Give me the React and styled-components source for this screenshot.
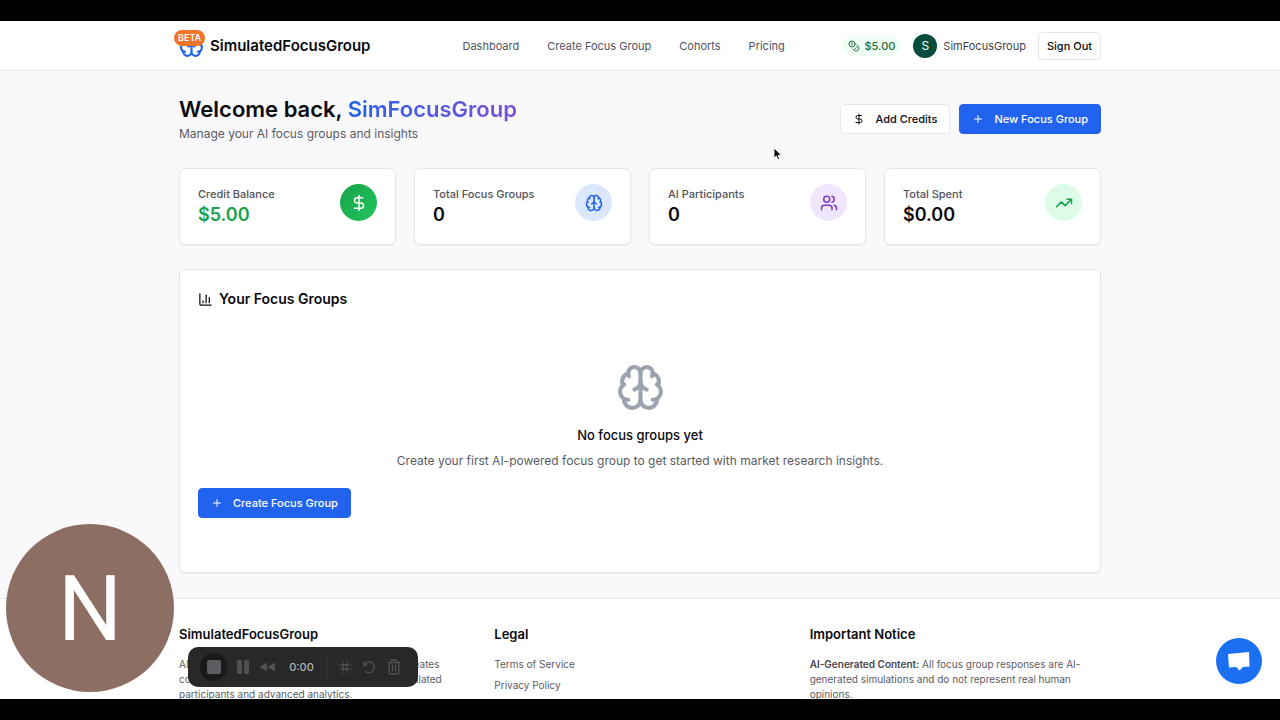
import styled, { createGlobalStyle } from "styled-components";
import { Brain, ChartColumn, Coins, DollarSign, Plus, TrendingUp, Users } from "lucide-react";

const stats = [
    { label: "Credit Balance", value: "$5.00", valueColor: "#16a34a", icon: DollarSign, color: "#ffffff", bg: "linear-gradient(135deg, #16a34a, #22c55e)" },
    { label: "Total Focus Groups", value: "0", icon: Brain, color: "#2563eb", bg: "#dbe7fd" },
    { label: "AI Participants", value: "0", icon: Users, color: "#7e3bc9", bg: "#f0e6fe" },
    { label: "Total Spent", value: "$0.00", icon: TrendingUp, color: "#16a34a", bg: "#dcfce7" },
];

const App = () => {
    return (
        <Frame>
            <GlobalStyle />
            <Screen>
                <Header>
                    <HeaderInner>
                        <Logo href="#">
                            <LogoMark>
                                <Brain size={25} color="#2563eb" />
                                <Beta>BETA</Beta>
                            </LogoMark>
                            SimulatedFocusGroup
                        </Logo>
                        <Nav>
                            <a href="#">Dashboard</a>
                            <a href="#">Create Focus Group</a>
                            <a href="#">Cohorts</a>
                            <a href="#">Pricing</a>
                        </Nav>
                        <Account>
                            <Credits>
                                <Coins size={12} />
                                $5.00
                            </Credits>
                            <User>
                                <UserInitial>S</UserInitial>
                                SimFocusGroup
                            </User>
                            <SignOut>Sign Out</SignOut>
                        </Account>
                    </HeaderInner>
                </Header>

                <Main>
                    <Welcome>
                        <div>
                            <h1>
                                Welcome back, <span>SimFocusGroup</span>
                            </h1>
                            <p>Manage your AI focus groups and insights</p>
                        </div>
                        <Actions>
                            <Button>
                                <DollarSign size={12} />
                                Add Credits
                            </Button>
                            <Button $primary>
                                <Plus size={12} />
                                New Focus Group
                            </Button>
                        </Actions>
                    </Welcome>

                    <Stats>
                        {stats.map(({ label, value, valueColor, icon: Icon, color, bg }) => (
                            <StatCard key={label}>
                                <div>
                                    <StatLabel>{label}</StatLabel>
                                    <StatValue $color={valueColor}>{value}</StatValue>
                                </div>
                                <StatIcon $bg={bg} $color={color}>
                                    <Icon size={18} />
                                </StatIcon>
                            </StatCard>
                        ))}
                    </Stats>

                    <Panel>
                        <PanelTitle>
                            <ChartColumn size={15} />
                            Your Focus Groups
                        </PanelTitle>
                        <Empty>
                            <Brain size={49} color="#9ca3af" />
                            <h3>No focus groups yet</h3>
                            <p>Create your first AI-powered focus group to get started with market research insights.</p>
                        </Empty>
                        <Button $primary>
                            <Plus size={12} />
                            Create Focus Group
                        </Button>
                    </Panel>
                </Main>

                <Footer>
                    <FooterInner>
                        <FooterColumn>
                            <h4>SimulatedFocusGroup</h4>
                            <p>
                                AI-powered focus group research platform that creates
                                <br />
                                comprehensive market research insights with simulated
                                <br />
                                participants and advanced analytics.
                            </p>
                        </FooterColumn>
                        <FooterColumn>
                            <h4>Legal</h4>
                            <FooterLinks>
                                <a href="#">Terms of Service</a>
                                <a href="#">Privacy Policy</a>
                            </FooterLinks>
                        </FooterColumn>
                        <FooterColumn>
                            <h4>Important Notice</h4>
                            <p>
                                <strong>AI-Generated Content:</strong> All focus group responses are AI-generated simulations and do not represent real human opinions.
                            </p>
                        </FooterColumn>
                    </FooterInner>
                </Footer>
            </Screen>

            <CameraBubble>N</CameraBubble>
            <Recorder>
                <StopButton aria-label="Stop">
                    <svg width="14" height="14" viewBox="0 0 14 14" fill="#5c5c61">
                        <rect width="14" height="14" rx="2" />
                    </svg>
                </StopButton>
                <RecorderButton aria-label="Pause">
                    <svg width="12" height="14" viewBox="0 0 12 14" fill="#505054">
                        <rect width="5" height="14" rx="1.5" />
                        <rect x="7" width="5" height="14" rx="1.5" />
                    </svg>
                </RecorderButton>
                <RecorderButton aria-label="Rewind">
                    <svg width="16" height="10" viewBox="0 0 16 10" fill="#505054">
                        <path d="M8 0.5v9L0.5 5zM16 0.5v9L8.5 5z" />
                    </svg>
                </RecorderButton>
                <time>0:00</time>
                <Divider />
                <RecorderButton aria-label="Effects">
                    <svg width="14" height="14" viewBox="0 0 14 14" fill="none" stroke="#505054" strokeWidth="1.4" strokeLinecap="round">
                        <path d="M5 3.5v7M9 3.5v7M3.5 5h7M3.5 9h7" />
                        <path d="M5 1v0M9 1v0M5 13v0M9 13v0M1 5h0M1 9h0M13 5h0M13 9h0" />
                    </svg>
                </RecorderButton>
                <RecorderButton aria-label="Restart">
                    <svg width="14" height="14" viewBox="0 0 14 14" fill="none" stroke="#505054" strokeWidth="1.3" strokeLinecap="round" strokeLinejoin="round">
                        <path d="M1.8 2v3h3M2 5a5.4 5.4 0 1 1 1.6 6.4" />
                    </svg>
                </RecorderButton>
                <RecorderButton aria-label="Delete">
                    <svg width="14" height="16" viewBox="0 0 14 16" fill="none" stroke="#505054" strokeWidth="1.4" strokeLinecap="round" strokeLinejoin="round">
                        <path d="M1 3.5h12M4.5 3.5V1h5v2.5M2.2 3.5v10q0 1.5 1.5 1.5h6.6q1.5 0 1.5-1.5v-10M5.5 6.5v5.5M8.5 6.5v5.5" />
                    </svg>
                </RecorderButton>
            </Recorder>
            <ChatButton aria-label="Open chat">
                <svg width="24" height="22" viewBox="0 0 24 22" fill="#ffffff">
                    <path d="M1 4L22 2L22.5 16.5L16 17L12.5 20.5L9 17L2 17.5z" />
                </svg>
            </ChatButton>
            <Pointer width="10" height="14" viewBox="0 0 10 14">
                <path d="M1 1v10l2.3-2 1.5 3.6 1.8-.8L5.1 8.3H8.5z" fill="#111" stroke="#fff" strokeWidth="0.8" />
            </Pointer>
        </Frame>
    );
};

const GlobalStyle = createGlobalStyle`
    * {
        box-sizing: border-box;
    }
    body {
        margin: 0;
        background: #000;
        font-family: Inter, "Liberation Sans", sans-serif;
        font-size: 12px;
        color: #0a0a0f;
    }
    h1, h2, h3, h4, p {
        margin: 0;
    }
    a {
        color: inherit;
        text-decoration: none;
    }
    button {
        font: inherit;
        cursor: pointer;
    }
    svg {
        flex-shrink: 0;
    }
`;

const Frame = styled.div`
    position: relative;
    height: 100vh;
    padding: 21px 0;
    background: #000;
`;

const Screen = styled.div`
    height: 100%;
    overflow: hidden;
    background: #f9f9fc;
`;

const Container = styled.div`
    max-width: 922px;
    margin: 0 auto;
`;

const Header = styled.header`
    background: #fff;
    border-bottom: 1px solid #e8e8ec;
`;

const HeaderInner = styled(Container)`
    display: flex;
    align-items: center;
    height: 49px;
`;

const Logo = styled.a`
    display: flex;
    align-items: center;
    gap: 6px;
    font-size: 15px;
    font-weight: 600;
`;

const LogoMark = styled.span`
    position: relative;
    display: flex;
`;

const Beta = styled.span`
    position: absolute;
    top: -3px;
    left: -5px;
    padding: 0 4px;
    border-radius: 8px;
    background: #f0742a;
    color: #fff;
    font-size: 9px;
    font-weight: 600;
    line-height: 16px;
`;

const Nav = styled.nav`
    display: flex;
    gap: 28px;
    margin-left: 92px;
    font-size: 11px;
    color: #52525b;
`;

const Account = styled.div`
    display: flex;
    align-items: center;
    gap: 12px;
    margin-left: auto;
    font-size: 11px;
    color: #3f3f46;
`;

const Credits = styled.span`
    display: flex;
    align-items: center;
    gap: 4px;
    padding: 3px 6px;
    border-radius: 10px;
    background: #f0fdf4;
    color: #1f6b3c;
    font-weight: 500;
`;

const User = styled.span`
    display: flex;
    align-items: center;
    gap: 6px;
`;

const UserInitial = styled.span`
    width: 24px;
    border-radius: 50%;
    background: #064e3b;
    color: #fff;
    font-size: 12px;
    line-height: 24px;
    text-align: center;
`;

const SignOut = styled.button`
    height: 28px;
    padding: 0 8px;
    border: 1px solid #e8e8ec;
    border-radius: 4px;
    background: #fff;
    color: #0a0a0f;
    font-weight: 500;
`;

const Main = styled(Container).attrs({ as: "main" })`
    display: block;
    padding: 23px 0 25px;
`;

const Welcome = styled.section`
    display: flex;
    align-items: center;
    justify-content: space-between;
    margin-bottom: 24px;

    h1 {
        font-size: 22px;
        font-weight: 600;
        line-height: 30px;
    }
    h1 span {
        background: linear-gradient(90deg, #2563eb, #7c4fd8);
        background-clip: text;
        color: transparent;
    }
    p {
        color: #5b5b63;
        line-height: 20px;
    }
`;

const Actions = styled.div`
    display: flex;
    gap: 9px;
`;

const Button = styled.button`
    display: inline-flex;
    align-items: center;
    gap: 10px;
    height: 30px;
    padding: 0 12px;
    border: 1px solid ${({ $primary }) => ($primary ? "#2563eb" : "#e8e8ec")};
    border-radius: 4px;
    background: ${({ $primary }) => ($primary ? "#2163ee" : "#fff")};
    color: ${({ $primary }) => ($primary ? "#fff" : "#0a0a0f")};
    font-size: 11px;
    font-weight: 500;
`;

const Stats = styled.section`
    display: grid;
    grid-template-columns: repeat(4, 1fr);
    gap: 18px;
    margin-bottom: 24px;
`;

const Card = styled.div`
    border: 1px solid #e6e6ea;
    border-radius: 6px;
    background: #fff;
    box-shadow: 0 1px 2px rgba(0, 0, 0, 0.05);
`;

const StatCard = styled(Card)`
    display: flex;
    justify-content: space-between;
    height: 77px;
    padding: 15px 18px;
`;

const StatLabel = styled.p`
    color: #52525b;
    font-size: 11px;
    font-weight: 500;
    line-height: 20px;
`;

const StatValue = styled.p`
    color: ${({ $color }) => $color || "#0a0a0f"};
    font-size: 18px;
    font-weight: 600;
    line-height: 22px;
`;

const StatIcon = styled.span`
    display: flex;
    align-items: center;
    justify-content: center;
    width: 37px;
    height: 37px;
    border-radius: 50%;
    background: ${({ $bg }) => $bg};
    color: ${({ $color }) => $color};
`;

const Panel = styled(Card)`
    padding: 20px 18px 54px;
`;

const PanelTitle = styled.h2`
    display: flex;
    align-items: center;
    gap: 6px;
    font-size: 14px;
    font-weight: 600;
    line-height: 18px;
`;

const Empty = styled.div`
    display: flex;
    flex-direction: column;
    align-items: center;
    padding: 55px 0 18px;

    h3 {
        margin-top: 12px;
        font-size: 13px;
        font-weight: 500;
        line-height: 22px;
    }
    p {
        margin-top: 6px;
        color: #5b5b63;
        line-height: 18px;
    }
`;

const Footer = styled.footer`
    border-top: 1px solid #e8e8ec;
    background: #fff;
`;

const FooterInner = styled(Container)`
    display: grid;
    grid-template-columns: repeat(3, 1fr);
    gap: 24px;
    padding: 24px 0;
`;

const FooterColumn = styled.div`
    color: #5b5b63;
    font-size: 10px;
    line-height: 15px;

    h4 {
        margin-bottom: 12px;
        color: #0a0a0f;
        font-size: 13px;
        font-weight: 600;
        line-height: 22px;
    }
    strong {
        font-weight: 600;
        color: #46464d;
    }
`;

const FooterLinks = styled.div`
    display: flex;
    flex-direction: column;
    gap: 6px;
`;

const CameraBubble = styled.div`
    position: absolute;
    bottom: 28px;
    left: 6px;
    width: 168px;
    padding-top: 4px;
    border-radius: 50%;
    background: #8d6e63;
    color: #fff;
    font-family: Roboto, sans-serif;
    font-size: 90px;
    line-height: 164px;
    text-align: center;
`;

const Recorder = styled.div`
    position: absolute;
    bottom: 33px;
    left: 188px;
    display: flex;
    align-items: center;
    width: 230px;
    height: 40px;
    padding: 0 12px;
    border-radius: 10px;
    background: #28282a;

    time {
        margin: 0 12px 0 10px;
        color: #b4b4b8;
        font-size: 11px;
        font-weight: 500;
    }
`;

const RecorderButton = styled.button`
    display: flex;
    align-items: center;
    justify-content: center;
    width: 25px;
    height: 28px;
    padding: 0;
    border: 0;
    background: none;
`;

const StopButton = styled(RecorderButton)`
    width: 28px;
    margin-right: 3px;
    border-radius: 50%;
    background: #19191b;
`;

const Divider = styled.span`
    width: 1px;
    height: 24px;
    margin-right: 6px;
    background: #38383b;
`;

const ChatButton = styled.button`
    position: absolute;
    right: 18px;
    bottom: 36px;
    display: flex;
    align-items: center;
    justify-content: center;
    width: 46px;
    height: 46px;
    padding: 0;
    border: 0;
    border-radius: 50%;
    background: #1b6ff2;
`;

const Pointer = styled.svg`
    position: absolute;
    top: 147px;
    left: 773px;
`;

export default App;
